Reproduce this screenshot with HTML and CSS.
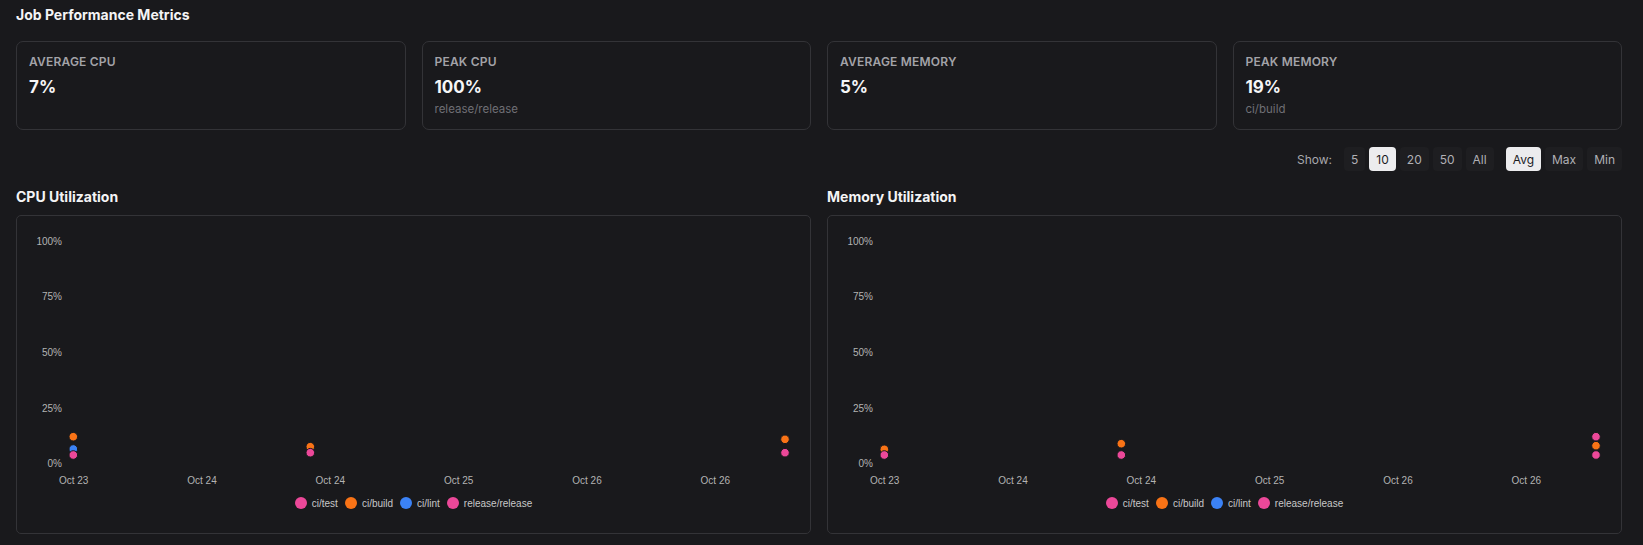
FILE: index.html
```html
<!DOCTYPE html>
<html lang="en">
  <head>
    <meta charset="UTF-8" />
    <title>Job Performance Metrics</title>
    <link rel="stylesheet" href="styles.css">
  </head>
  <body>
    <h2 class="section-title">Job Performance Metrics</h2>

    <div class="stats">
      <div class="stat-card">
        <div class="stat-label">Average CPU</div>
        <div class="stat-value">7%</div>
      </div>
      <div class="stat-card">
        <div class="stat-label">Peak CPU</div>
        <div class="stat-value">100%</div>
        <div class="stat-sub">release/release</div>
      </div>
      <div class="stat-card">
        <div class="stat-label">Average Memory</div>
        <div class="stat-value">5%</div>
      </div>
      <div class="stat-card">
        <div class="stat-label">Peak Memory</div>
        <div class="stat-value">19%</div>
        <div class="stat-sub">ci/build</div>
      </div>
    </div>

    <div class="toolbar">
      <span class="toolbar-label">Show:</span>
      <div class="btn-group">
        <button class="btn">5</button>
        <button class="btn active">10</button>
        <button class="btn">20</button>
        <button class="btn">50</button>
        <button class="btn">All</button>
      </div>
      <div class="btn-group">
        <button class="btn active">Avg</button>
        <button class="btn">Max</button>
        <button class="btn">Min</button>
      </div>
    </div>

    <div class="charts">
      <div class="chart">
        <h3 class="chart-title">CPU Utilization</h3>
        <div class="chart-box">
          <svg class="plot" width="793" height="280">
            <g class="axis-y">
              <text x="45" y="28.5">100%</text>
              <text x="45" y="84.2">75%</text>
              <text x="45" y="139.9">50%</text>
              <text x="45" y="195.6">25%</text>
              <text x="45" y="251.2">0%</text>
            </g>
            <g class="axis-x">
              <text x="56.7" y="268">Oct 23</text>
              <text x="185" y="268">Oct 24</text>
              <text x="313.3" y="268">Oct 24</text>
              <text x="441.7" y="268">Oct 25</text>
              <text x="570" y="268">Oct 26</text>
              <text x="698.3" y="268">Oct 26</text>
            </g>
            <g class="points">
              <circle class="pt-build" cx="56.3" cy="220.7" r="4.3" />
              <circle class="pt-lint" cx="56.3" cy="233" r="4.3" />
              <circle class="pt-test" cx="56.3" cy="239" r="4.3" />
              <circle class="pt-build" cx="293.3" cy="230.7" r="4.3" />
              <circle class="pt-test" cx="293.3" cy="236.7" r="4.3" />
              <circle class="pt-build" cx="768" cy="223.3" r="4.3" />
              <circle class="pt-test" cx="768" cy="236.7" r="4.3" />
            </g>
          </svg>
          <div class="legend">
            <span class="legend-item"><i class="dot test"></i>ci/test</span>
            <span class="legend-item"><i class="dot build"></i>ci/build</span>
            <span class="legend-item"><i class="dot lint"></i>ci/lint</span>
            <span class="legend-item"><i class="dot release"></i>release/release</span>
          </div>
        </div>
      </div>

      <div class="chart">
        <h3 class="chart-title">Memory Utilization</h3>
        <div class="chart-box">
          <svg class="plot" width="793" height="280">
            <g class="axis-y">
              <text x="45" y="28.5">100%</text>
              <text x="45" y="84.2">75%</text>
              <text x="45" y="139.9">50%</text>
              <text x="45" y="195.6">25%</text>
              <text x="45" y="251.2">0%</text>
            </g>
            <g class="axis-x">
              <text x="56.7" y="268">Oct 23</text>
              <text x="185" y="268">Oct 24</text>
              <text x="313.3" y="268">Oct 24</text>
              <text x="441.7" y="268">Oct 25</text>
              <text x="570" y="268">Oct 26</text>
              <text x="698.3" y="268">Oct 26</text>
            </g>
            <g class="points">
              <circle class="pt-build" cx="56.3" cy="233.3" r="4.3" />
              <circle class="pt-test" cx="56.3" cy="239" r="4.3" />
              <circle class="pt-build" cx="293.3" cy="227.7" r="4.3" />
              <circle class="pt-test" cx="293.3" cy="239" r="4.3" />
              <circle class="pt-test" cx="768" cy="220.7" r="4.3" />
              <circle class="pt-build" cx="768" cy="229.7" r="4.3" />
              <circle class="pt-test" cx="768" cy="239" r="4.3" />
            </g>
          </svg>
          <div class="legend">
            <span class="legend-item"><i class="dot test"></i>ci/test</span>
            <span class="legend-item"><i class="dot build"></i>ci/build</span>
            <span class="legend-item"><i class="dot lint"></i>ci/lint</span>
            <span class="legend-item"><i class="dot release"></i>release/release</span>
          </div>
        </div>
      </div>
    </div>
  </body>
</html>
```

FILE: styles.css
```css
body {
  margin: 0;
  padding: 0 21px 0 16px;
  background: #19191c;
  color: #f4f4f5;
  font-family: "Inter", "Noto Sans", sans-serif;
  overflow: hidden;
}

.section-title {
  margin: 0;
  padding-top: 5px;
  font-size: 14px;
  line-height: 20px;
  font-weight: 700;
}

.stats {
  display: grid;
  grid-template-columns: repeat(4, 1fr);
  gap: 16px;
  margin-top: 16px;
}

.stat-card {
  height: 89px;
  box-sizing: border-box;
  padding: 12px;
  border: 1px solid #333337;
  border-radius: 7px;
}

.stat-label {
  font-size: 12px;
  line-height: 16px;
  font-weight: 600;
  text-transform: uppercase;
  letter-spacing: 0.2px;
  color: #a3a3a8;
}

.stat-value {
  margin-top: 5px;
  font-size: 17px;
  line-height: 24px;
  font-weight: 700;
  color: #f6f6f7;
}

.stat-sub {
  margin-top: 2px;
  font-size: 11.5px;
  line-height: 16px;
  color: #6f6f75;
}

.toolbar {
  display: flex;
  justify-content: flex-end;
  align-items: center;
  gap: 12px;
  margin-top: 17px;
  height: 24px;
}

.toolbar-label {
  font-size: 12px;
  color: #a8a8ad;
}

.btn-group {
  display: flex;
  gap: 4px;
}

.btn {
  height: 24px;
  padding: 0 7px;
  border: none;
  border-radius: 4px;
  background: #1e1e21;
  color: #b0b0b5;
  font-family: inherit;
  font-size: 12px;
}

.btn.active {
  background: #ececee;
  color: #1b1b1e;
}

.charts {
  display: grid;
  grid-template-columns: 1fr 1fr;
  gap: 16px;
  margin-top: 16px;
}

.chart-title {
  margin: 0 0 8px;
  font-size: 14px;
  line-height: 20px;
  font-weight: 700;
}

.chart-box {
  border: 1px solid #333337;
  border-radius: 5px;
  padding-bottom: 23px;
}

.plot {
  display: block;
  font-family: "Liberation Sans", Arial, sans-serif;
  font-size: 10px;
}

.axis-y text {
  fill: #b3b3b3;
  text-anchor: end;
}

.axis-x text {
  fill: #b3b3b3;
  text-anchor: middle;
}

.points circle {
  stroke: #19191c;
  stroke-width: 1;
}

.pt-test {
  fill: #ec4899;
}

.pt-build {
  fill: #f97316;
}

.pt-lint {
  fill: #3b82f6;
}

.legend {
  display: flex;
  justify-content: center;
  gap: 7px;
  height: 14px;
  align-items: center;
  font-family: "Liberation Sans", Arial, sans-serif;
  font-size: 10px;
  color: #c8c8c8;
}

.legend-item {
  display: flex;
  align-items: center;
  gap: 5px;
}

.dot {
  width: 12px;
  height: 12px;
  border-radius: 50%;
}

.dot.test,
.dot.release {
  background: #ec4899;
}

.dot.build {
  background: #f97316;
}

.dot.lint {
  background: #3b82f6;
}
```
